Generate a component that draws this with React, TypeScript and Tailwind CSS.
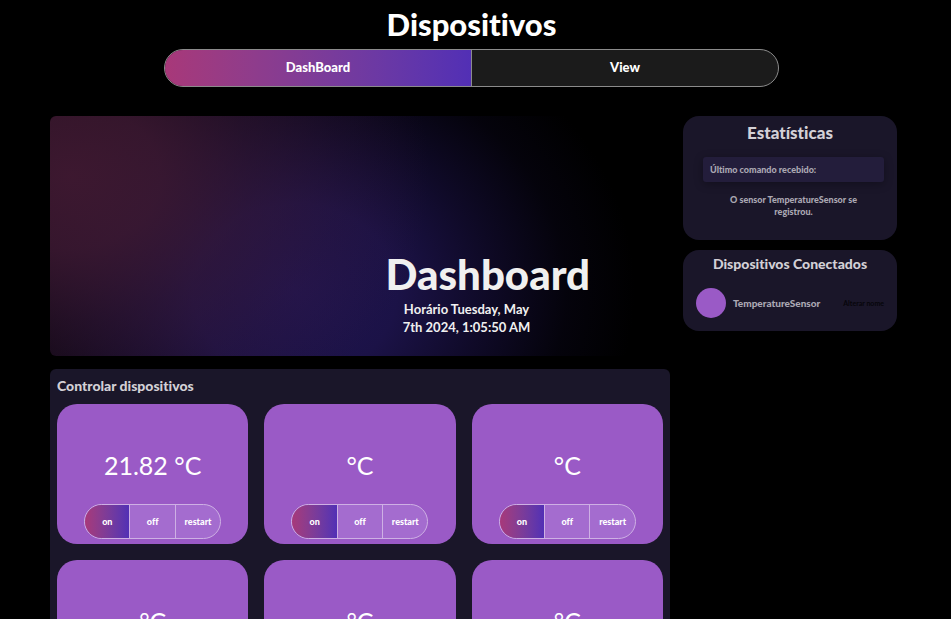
import { useState } from "react";

const modes = ["on", "off", "restart"];

function DeviceCard({ reading }: { reading: string }) {
  const [mode, setMode] = useState("on");
  return (
    <article className="flex h-[140px] flex-col items-center justify-end rounded-[20px] bg-[#9a5ac6] pb-[5px]">
      <p className="mb-[21px] text-[25px] leading-9 text-white">{reading}</p>
      <div className="flex h-[35px] w-[137px] overflow-hidden rounded-full border border-[#ceb0e4] bg-[#a46ccf] text-[9px] font-black text-white">
        {modes.map((name) => (
          <button
            key={name}
            type="button"
            onClick={() => setMode(name)}
            className={`flex-1 border-r border-[#ceb0e4] last:border-r-0 ${
              mode === name ? "bg-linear-to-r from-[#a83879] to-[#522fb5]" : ""
            }`}
          >
            {name}
          </button>
        ))}
      </div>
    </article>
  );
}

const readings = ["21.82 °C", "°C", "°C", "°C", "°C", "°C"];

export default function App() {
  return (
    <div className="min-h-screen bg-black pb-4 font-[Lato,'Noto_Sans',sans-serif] text-white [font-variant-ligatures:none]">
      <header className="flex flex-col items-center pr-2">
        <h1 className="pt-[6px] text-[31px] leading-9 font-black">Dispositivos</h1>
        <nav className="mt-[7px] flex h-[38px] w-[615px] max-w-full overflow-hidden rounded-full border border-[#8b8b8b] bg-[#1b1b1b] text-[13px] font-black">
          <button
            type="button"
            className="flex-1 border-r border-[#8b8b8b] bg-linear-to-r from-[#a83879] to-[#522fb5]"
          >
            DashBoard
          </button>
          <button type="button" className="flex-1">
            View
          </button>
        </nav>
      </header>

      <main className="mt-[29px] flex items-start gap-[13px] pr-[54px] pl-[50px]">
        <div className="flex min-w-0 flex-1 flex-col gap-[13px]">
          <section className="flex h-[240px] items-end justify-end rounded-md bg-[radial-gradient(ellipse_360px_290px_at_20px_60px,#421a33e8_0%,#401a33d0_25%,#3c193280_50%,#3c193238_75%,#3c193200_100%),radial-gradient(ellipse_340px_290px_at_245px_175px,#1f1450_0%,#1e144ee8_30%,#1a114498_55%,#140d3438_80%,#0a071a00_100%)] pr-20 pb-5">
            <div>
              <h2 className="text-[42px] leading-[48px] font-black text-[#f0f0f0]">Dashboard</h2>
              <p className="mt-[2px] w-[162px] px-3 text-center text-[13px] leading-[18px] font-bold text-[#f0f0f0]">
                Horário Tuesday, May 7th 2024, 1:05:50 AM
              </p>
            </div>
          </section>

          <section className="rounded-md bg-[#1a1629] p-[7px]">
            <h2 className="text-[14px] leading-5 font-black text-[#d3d0d6]">Controlar dispositivos</h2>
            <div className="mt-2 grid grid-cols-3 gap-4">
              {readings.map((reading, i) => (
                <DeviceCard key={i} reading={reading} />
              ))}
            </div>
          </section>
        </div>

        <aside className="flex w-[214px] flex-col gap-[10px]">
          <section className="h-[124px] rounded-[16px] bg-[#1a1629] px-[13px] pt-[5px]">
            <h2 className="text-center text-[17px] leading-6 font-black text-[#d3d0d6]">
              Estatísticas
            </h2>
            <h3 className="mt-3 ml-[7px] rounded-[3px] bg-[#231d3b] px-[7px] text-[9px] leading-[25px] font-black text-[#aba8b3] shadow-[0_2px_10px_#00000050]">
              Último comando recebido:
            </h3>
            <p className="mt-3 ml-[7px] px-4 text-center text-[9px] leading-3 font-black text-[#aba8b3]">
              O sensor TemperatureSensor se registrou.
            </p>
          </section>
          <section className="h-[81px] rounded-[16px] bg-[#1a1629] px-[13px] pt-1">
            <h2 className="text-center text-[14px] leading-5 font-black text-[#d3d0d6]">
              Dispositivos Conectados
            </h2>
            <div className="mt-[14px] flex items-center">
              <span className="size-[30px] rounded-full bg-[#9a5ac6]" />
              <span className="ml-[7px] text-[10px] font-black text-[#aba8b3]">
                TemperatureSensor
              </span>
              <button type="button" className="ml-auto text-[7px] font-bold text-[#06050a]">
                Alterar nome
              </button>
            </div>
          </section>
        </aside>
      </main>
    </div>
  );
}
